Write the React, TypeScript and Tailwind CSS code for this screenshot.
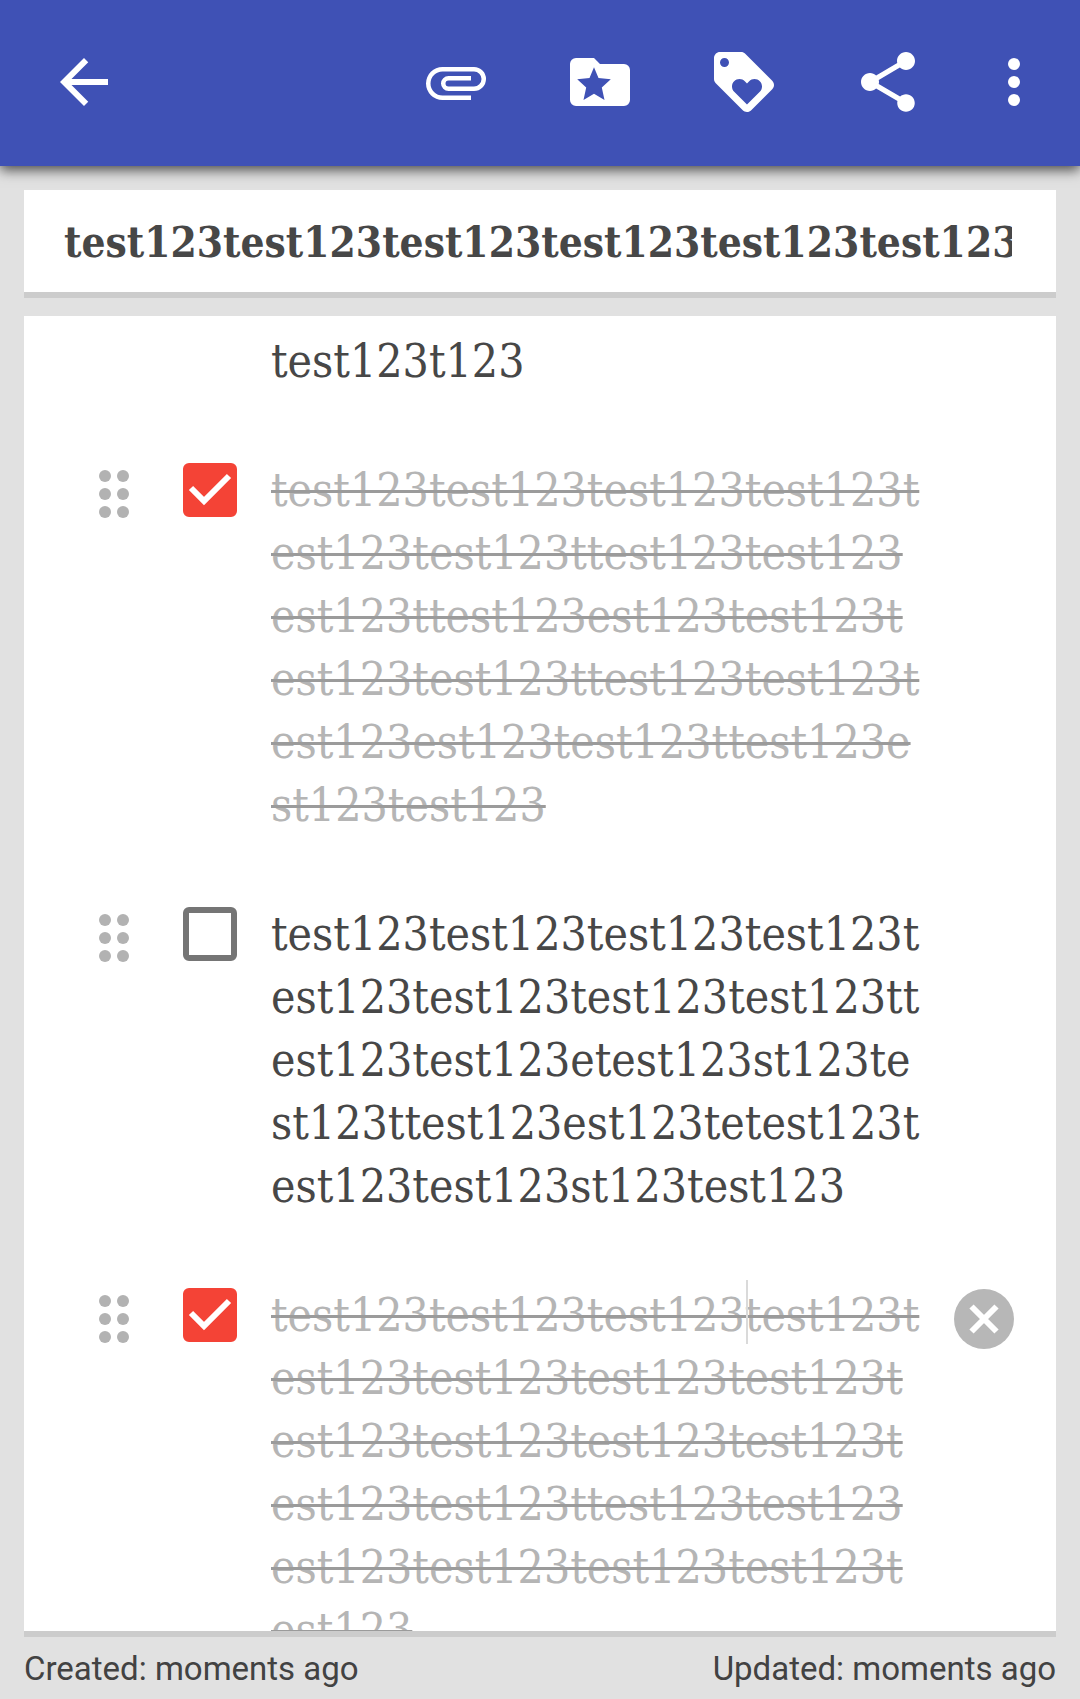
import { useState } from 'react';
import type { ReactNode } from 'react';

type Item = {
  id: number;
  done: boolean;
  lines: string[];
  focused?: boolean;
};

const TITLE = 'test123'.repeat(8);

const initialItems: Item[] = [
  {
    id: 2,
    done: true,
    lines: [
      'test123test123test123test123t',
      'est123test123ttest123test123',
      'est123ttest123est123test123t',
      'est123test123ttest123test123t',
      'est123est123test123ttest123e',
      'st123test123',
    ],
  },
  {
    id: 3,
    done: false,
    lines: [
      'test123test123test123test123t',
      'est123test123test123test123tt',
      'est123test123etest123st123te',
      'st123ttest123est123tetest123t',
      'est123test123st123test123',
    ],
  },
  {
    id: 4,
    done: true,
    focused: true,
    lines: [
      'test123test123test123test123t',
      'est123test123test123test123t',
      'est123test123test123test123t',
      'est123test123ttest123test123',
      'est123test123test123test123t',
      'est123',
    ],
  },
];

function Icon({ children }: { children: ReactNode }) {
  return (
    <svg viewBox="0 0 24 24" className="size-[72px]" fill="currentColor" aria-hidden="true">
      {children}
    </svg>
  );
}

function BarButton({ label, children }: { label: string; children: ReactNode }) {
  return (
    <button type="button" aria-label={label} className="flex w-36 shrink-0 items-center justify-center">
      <Icon>{children}</Icon>
    </button>
  );
}

function TopBar() {
  return (
    <header className="z-10 flex h-[166px] shrink-0 items-center bg-[#3f51b5] px-3 pb-0.5 text-white shadow-[0_4px_12px_rgba(0,0,0,0.68)]">
      <button type="button" aria-label="Back" className="mr-auto flex px-9">
        <Icon>
          <path d="M20 11H7.83l5.59-5.59L12 4l-8 8 8 8 1.41-1.41L7.83 13H20v-2z" />
        </Icon>
      </button>
      <BarButton label="Attach">
        <path d="M7.5 18A5.5 5.5 0 0 1 2 12.500A5.500 5.500 0 0 1 7.500 7H18a4 4 0 0 1 0 8H9.500a2.500 2.500 0 0 1 0-5H17v1.500H9.500a1 1 0 0 0 0 2H18a2.500 2.500 0 0 0 0-5H7.500a4 4 0 0 0 0 8H17V18H7.500z" />
      </BarButton>
      <BarButton label="Notebook">
        <path
          fillRule="evenodd"
          d="M20 6h-8l-2-2H4a2 2 0 0 0-2 2v12a2 2 0 0 0 2 2h16a2 2 0 0 0 2-2V8a2 2 0 0 0-2-2zM10 7.100l1.500 3.600 4.100.4-3 2.700.9 4.200-3.500-2.100L6.500 18l.9-4.200-3-2.700 4.100-.4z"
        />
      </BarButton>
      <BarButton label="Tags">
        <path d="M21.410 11.580l-9-9C12.050 2.220 11.550 2 11 2H4c-1.100 0-2 .9-2 2v7c0 .55.22 1.050.59 1.420l9 9c.36.36.86.58 1.410.58.55 0 1.050-.22 1.410-.59l7-7c.37-.36.59-.86.59-1.410 0-.55-.23-1.060-.59-1.420zM5.500 7C4.670 7 4 6.330 4 5.500S4.670 4 5.500 4 7 4.670 7 5.500 6.330 7 5.500 7zm11.770 8.270L13 19.540l-4.270-4.270C8.280 14.810 8 14.190 8 13.500c0-1.380 1.120-2.500 2.500-2.500.69 0 1.320.28 1.770.74l.73.72.73-.73c.45-.45 1.080-.73 1.770-.73 1.380 0 2.500 1.120 2.500 2.500 0 .69-.28 1.320-.73 1.770z" />
      </BarButton>
      <BarButton label="Share">
        <path d="M18 16.080c-.76 0-1.440.3-1.960.77L8.910 12.700c.05-.23.09-.46.09-.7s-.04-.47-.09-.7l7.050-4.110c.54.5 1.250.81 2.040.81 1.660 0 3-1.340 3-3s-1.340-3-3-3-3 1.340-3 3c0 .24.04.47.09.7L8.040 9.810C7.500 9.310 6.790 9 6 9c-1.660 0-3 1.340-3 3s1.340 3 3 3c.79 0 1.500-.31 2.040-.81l7.120 4.160c-.05.21-.08.43-.08.65 0 1.610 1.310 2.920 2.920 2.920s2.920-1.310 2.920-2.920-1.310-2.920-2.920-2.920z" />
      </BarButton>
      <button type="button" aria-label="More options" className="flex px-[18px]">
        <Icon>
          <circle cx="12" cy="6" r="2" />
          <circle cx="12" cy="12" r="2" />
          <circle cx="12" cy="18" r="2" />
        </Icon>
      </button>
    </header>
  );
}

const fieldBase =
  "block w-full resize-none overflow-hidden whitespace-pre bg-transparent p-0 pt-1 text-[46px] leading-[63px] outline-none [font-family:'DejaVu_Serif_Condensed','DejaVu_Serif',serif]";

function ChecklistRow({ item, onToggle }: { item: Item; onToggle: () => void }) {
  return (
    <li className="flex items-start">
      <button
        type="button"
        aria-label="Move item"
        className="mt-[15px] ml-[75px] grid shrink-0 grid-cols-2 gap-1.5"
      >
        {[0, 1, 2, 3, 4, 5].map((dot) => (
          <span key={dot} className="size-3 rounded-full bg-[#b2b2b2]" />
        ))}
      </button>
      <label className="relative mt-2 ml-[54px] flex shrink-0">
        <input
          type="checkbox"
          aria-label="Done"
          checked={item.done}
          onChange={onToggle}
          className="size-[54px] appearance-none rounded-md border-6 border-[#757575] checked:border-[#f44336] checked:bg-[#f44336]"
        />
        {item.done && (
          <svg
            viewBox="0 0 54 54"
            className="pointer-events-none absolute inset-0 size-[54px]"
            fill="none"
            stroke="#fff"
            strokeWidth="6"
            aria-hidden="true"
          >
            <path d="M8 25l13 13 25-25" />
          </svg>
        )}
      </label>
      <div className="relative ml-[34px] min-w-0 flex-1">
        <textarea
          aria-label="Item text"
          rows={item.lines.length}
          defaultValue={item.lines.join('\n')}
          className={
            item.done
              ? `${fieldBase} text-[#b5b5b5] line-through decoration-[#9b9b9b] decoration-3`
              : `${fieldBase} text-[#474747]`
          }
        />
        {item.focused && <span className="absolute top-0 left-[475px] h-16 w-0.5 bg-[#dadada]" />}
      </div>
      <div className="mt-[9px] mr-[42px] ml-6 flex w-[60px] shrink-0">
        {item.focused && (
          <button
            type="button"
            aria-label="Delete item"
            className="flex size-[60px] items-center justify-center rounded-full bg-[#b7b7b7]"
          >
            <svg viewBox="0 0 60 60" className="size-[60px]" fill="none" stroke="#fff" strokeWidth="6" aria-hidden="true">
              <path d="M17.500 17.500l25 25M42.500 17.500l-25 25" />
            </svg>
          </button>
        )}
      </div>
    </li>
  );
}

export default function App() {
  const [items, setItems] = useState(initialItems);

  const toggle = (id: number) =>
    setItems((current) => current.map((item) => (item.id === id ? { ...item, done: !item.done } : item)));

  return (
    <div className="flex h-screen flex-col overflow-hidden bg-[#e1e1e1]">
      <TopBar />
      <main className="flex min-h-0 flex-1 flex-col gap-[18px] px-6 pt-6">
        <div className="shrink-0 border-b-6 border-[#cccccc] bg-white py-4 pr-11 pl-10">
          <input
            type="text"
            aria-label="Title"
            defaultValue={TITLE}
            className="block h-[70px] w-full bg-transparent p-0 pt-0.5 text-[42px] font-bold text-[#474747] outline-none [font-family:'DejaVu_Serif_Condensed','DejaVu_Serif',serif]"
          />
        </div>
        <div className="min-h-0 flex-1 overflow-hidden border-b-6 border-[#cccccc] bg-white">
          <ul className="flex flex-col gap-[62px] pt-2.5">
            <li className="pr-[126px] pl-[247px]">
              <textarea
                aria-label="Item text"
                rows={1}
                defaultValue="test123t123"
                className={`${fieldBase} text-[#474747]`}
              />
            </li>
            {items.map((item) => (
              <ChecklistRow key={item.id} item={item} onToggle={() => toggle(item.id)} />
            ))}
          </ul>
        </div>
      </main>
      <footer className="flex h-[62px] shrink-0 items-center justify-between px-6 pt-0.5 text-[33px] text-[#424242] [font-family:Roboto,sans-serif]">
        <span>Created: moments ago</span>
        <span>Updated: moments ago</span>
      </footer>
    </div>
  );
}
